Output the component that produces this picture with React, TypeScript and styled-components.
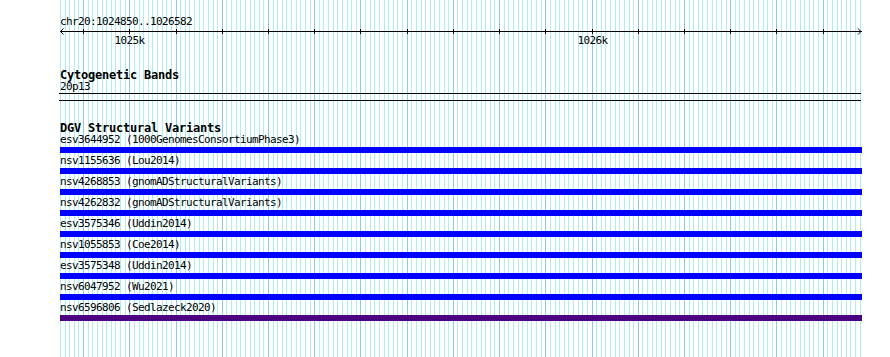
import styled, { createGlobalStyle } from 'styled-components';

const START = 1024850;
const END = 1026582;
const LEFT = 60;
const WIDTH = 802;
const SCALE = (WIDTH - 1) / (END - START + 1);

const px = (bp: number) => Math.round((bp - START) * SCALE);

const variants = [
  { name: 'esv3644952', study: '1000GenomesConsortiumPhase3', color: '#0000ff' },
  { name: 'nsv1155636', study: 'Lou2014', color: '#0000ff' },
  { name: 'nsv4268853', study: 'gnomADStructuralVariants', color: '#0000ff' },
  { name: 'nsv4262832', study: 'gnomADStructuralVariants', color: '#0000ff' },
  { name: 'esv3575346', study: 'Uddin2014', color: '#0000ff' },
  { name: 'nsv1055853', study: 'Coe2014', color: '#0000ff' },
  { name: 'esv3575348', study: 'Uddin2014', color: '#0000ff' },
  { name: 'nsv6047952', study: 'Wu2021', color: '#0000ff' },
  { name: 'nsv6596806', study: 'Sedlazeck2020', color: '#4b0082' },
];

const GlobalStyle = createGlobalStyle`
  html, body {
    margin: 0;
    padding: 0;
    background: #ffffff;
  }
`;

const Page = styled.div`
  position: relative;
  width: 890px;
  height: 357px;
  overflow: hidden;
  background: #ffffff;
`;

const GridLayer = styled.svg`
  position: absolute;
  left: 0;
  top: 0;
  z-index: 0;
  shape-rendering: crispEdges;
`;

const Panel = styled.div`
  position: relative;
  z-index: 1;
  display: flex;
  flex-direction: column;
  padding-left: ${LEFT}px;
  width: ${WIDTH}px;
`;

const SmallText = styled.div`
  font-family: 'DejaVu Sans Mono', 'Liberation Mono', monospace;
  font-size: 11px;
  letter-spacing: -0.62px;
  line-height: 12px;
  height: 11px;
  padding-top: 1px;
  color: #000;
  white-space: pre;
`;

const Landmark = styled(SmallText)`
  margin-top: 15px;
`;

const Ruler = styled.svg`
  display: block;
  overflow: visible;
  shape-rendering: crispEdges;
  font-family: 'DejaVu Sans Mono', 'Liberation Mono', monospace;
  font-size: 11px;
  letter-spacing: -0.62px;
`;

const Track = styled.section<{ $gap: number }>`
  display: flex;
  flex-direction: column;
  margin-top: ${(p) => p.$gap}px;
`;

const TrackTitle = styled.div`
  font-family: 'DejaVu Sans Mono', 'Liberation Mono', monospace;
  font-weight: bold;
  font-size: 12px;
  letter-spacing: -0.22px;
  line-height: 12px;
  height: 11px;
  padding-top: 1px;
  color: #000;
`;

const Band = styled.div`
  margin-top: 1px;
  margin-left: -1px;
  width: ${WIDTH}px;
  height: 6px;
  border-top: 1px solid #000;
  border-bottom: 1px solid #000;
`;

const Row = styled.div`
  display: flex;
  flex-direction: column;
  gap: 2px;
  padding-bottom: 1px;
`;

const Bar = styled.div<{ $color: string }>`
  width: ${WIDTH}px;
  height: 6px;
  background: ${(p) => p.$color};
`;

function Grid() {
  const lines = [];
  for (let bp = START; bp <= END; bp += 10) {
    const major = bp % 100 === 0;
    const x = LEFT + px(bp) + 0.5;
    lines.push(
      <line key={bp} x1={x} x2={x} y1={0} y2={357} stroke={major ? '#8ec8f0' : '#aeeeee'} strokeWidth={1} />
    );
  }
  return (
    <GridLayer width={890} height={357}>
      {lines}
    </GridLayer>
  );
}

function ScaleBar() {
  const ticks = [];
  for (let bp = Math.ceil(START / 100) * 100; bp <= END; bp += 100) ticks.push(bp);
  const right = WIDTH - 1;
  return (
    <Ruler width={WIDTH} height={20}>
      <line x1={0} x2={right + 0.5} y1={4.5} y2={4.5} stroke="#000" />
      <path d={`M3.5 1.5 L0.5 4.5 L3.5 7.5`} fill="none" stroke="#000" shapeRendering="auto" />
      <path d={`M${right - 3} 1.5 L${right} 4.5 L${right - 3} 7.5`} fill="none" stroke="#000" shapeRendering="auto" />
      {ticks.map((bp) => (
        <line key={bp} x1={px(bp) + 0.5} x2={px(bp) + 0.5} y1={2} y2={7} stroke="#000" />
      ))}
      {ticks
        .filter((bp) => bp % 1000 === 0)
        .map((bp) => (
          <text key={bp} x={px(bp) + 0.5} y={17} textAnchor="middle" fill="#000">
            {`${bp / 1000}k`}
          </text>
        ))}
    </Ruler>
  );
}

export default function App() {
  return (
    <Page>
      <GlobalStyle />
      <Grid />
      <Panel>
        <Landmark>chr20:1024850..1026582</Landmark>
        <ScaleBar />
        <Track $gap={21}>
          <TrackTitle>Cytogenetic Bands</TrackTitle>
          <SmallText>20p13</SmallText>
          <Band />
        </Track>
        <Track $gap={20}>
          <TrackTitle>DGV Structural Variants</TrackTitle>
          {variants.map((v) => (
            <Row key={v.name}>
              <SmallText>{`${v.name} (${v.study})`}</SmallText>
              <Bar $color={v.color} />
            </Row>
          ))}
        </Track>
      </Panel>
    </Page>
  );
}
